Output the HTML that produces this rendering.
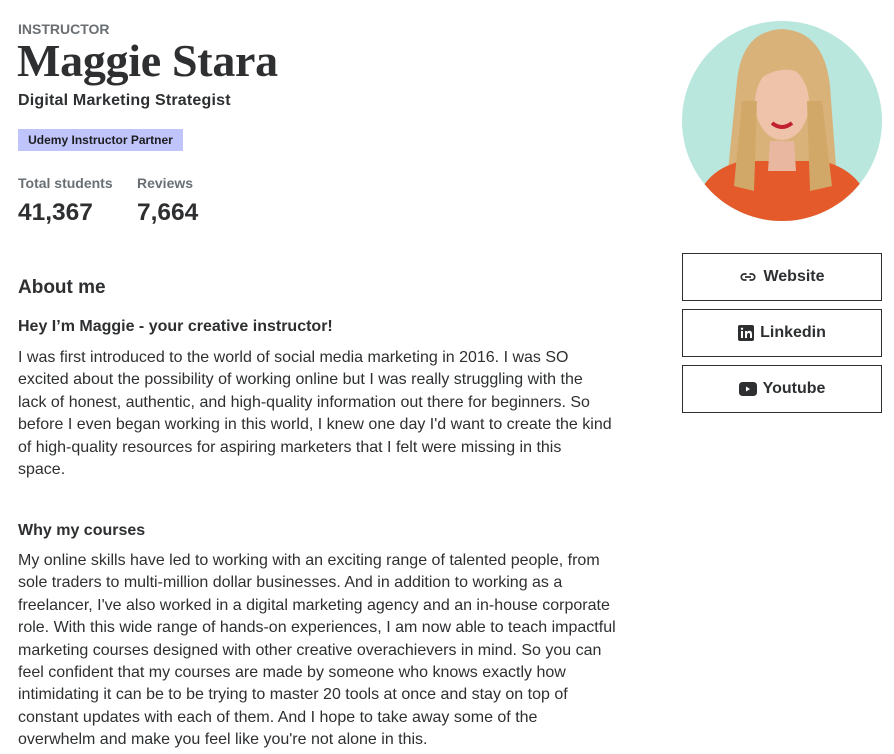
<!DOCTYPE html>
<html><head><meta charset="utf-8"><style>
body{margin:0;background:#fff;font-family:"Liberation Sans",sans-serif;color:#2d2f31;width:894px;height:754px;overflow:hidden;position:relative}
.a{position:absolute}
.p{font-size:16px;letter-spacing:0;line-height:22.4px;white-space:nowrap;margin:0}
.btn{position:absolute;left:682px;width:198px;height:46px;border:1px solid #2d2f31;display:flex;align-items:center;justify-content:center;font-weight:bold;font-size:16px;gap:6px}
</style></head><body>
<div class="a" style="left:18px;top:21px;font-size:14px;font-weight:bold;color:#6a6f73">INSTRUCTOR</div>
<div class="a" style="left:17px;top:34px;font-family:'Liberation Serif',serif;font-weight:bold;font-size:46px;letter-spacing:-0.3px">Maggie Stara</div>
<div class="a" style="left:18px;top:92px;font-size:16px;font-weight:bold;letter-spacing:0.2px">Digital Marketing Strategist</div>
<div class="a" style="left:18px;top:129px;width:165px;height:22px;background:#c0c4fc;font-size:12px;font-weight:bold;line-height:22px;text-align:center;color:#1c1d1f">Udemy Instructor Partner</div>
<div class="a" style="left:18px;top:175px;font-size:14px;font-weight:bold;color:#6a6f73">Total students</div>
<div class="a" style="left:137px;top:175px;font-size:14px;font-weight:bold;color:#6a6f73">Reviews</div>
<div class="a" style="left:18px;top:199px;font-size:24.5px;font-weight:bold">41,367</div>
<div class="a" style="left:137px;top:199px;font-size:24.5px;font-weight:bold">7,664</div>
<div class="a" style="left:18px;top:277px;font-size:19px;font-weight:bold">About me</div>
<div class="a" style="left:18px;top:318px;font-size:16px;font-weight:bold">Hey I’m Maggie - your creative instructor!</div>
<p class="a p" style="left:18px;top:347px">I was first introduced to the world of social media marketing in 2016. I was SO<br>excited about the possibility of working online but I was really struggling with the<br>lack of honest, authentic, and high-quality information out there for beginners. So<br>before I even began working in this world, I knew one day I'd want to create the kind<br>of high-quality resources for aspiring marketers that I felt were missing in this<br>space.</p>
<div class="a" style="left:18px;top:522px;font-size:16px;font-weight:bold">Why my courses</div>
<p class="a p" style="left:18px;top:550px">My online skills have led to working with an exciting range of talented people, from<br>sole traders to multi-million dollar businesses. And in addition to working as a<br>freelancer, I've also worked in a digital marketing agency and an in-house corporate<br>role. With this wide range of hands-on experiences, I am now able to teach impactful<br>marketing courses designed with other creative overachievers in mind. So you can<br>feel confident that my courses are made by someone who knows exactly how<br>intimidating it can be to be trying to master 20 tools at once and stay on top of<br>constant updates with each of them. And I hope to take away some of the<br>overwhelm and make you feel like you're not alone in this.</p>
<svg class="a" style="left:682px;top:21px" width="200" height="200" viewBox="0 0 200 200">
<defs><clipPath id="c"><circle cx="100" cy="100" r="100"/></clipPath></defs>
<g clip-path="url(#c)">
<rect width="200" height="200" fill="#b9e6dd"/>
<path d="M55 60 Q60 10 100 8 Q142 10 148 65 L155 160 L45 160 Z" fill="#d9b27a"/>
<path d="M10 200 Q15 150 60 140 L140 140 Q185 150 192 200 Z" fill="#e45a2a"/>
<path d="M88 120 L112 120 L114 150 L86 150 Z" fill="#e9b79f"/>
<ellipse cx="100" cy="82" rx="27" ry="37" fill="#efc3aa"/>
<path d="M70 60 Q80 20 110 22 Q130 30 132 70 L125 55 Q100 40 75 60 Z" fill="#d9b27a"/>
<path d="M60 80 L75 80 L72 170 L52 165 Z M125 80 L140 80 L150 165 L128 170 Z" fill="#d2a868"/>
<path d="M90 102 Q100 110 110 102" stroke="#c02030" stroke-width="4" fill="none"/>
</g></svg>
<div class="btn" style="top:253px"><svg width="18" height="18" viewBox="0 0 24 24" fill="none" stroke="#2d2f31" stroke-width="2.2"><path d="M10 8H7a4 4 0 0 0 0 8h3M14 8h3a4 4 0 0 1 0 8h-3M8 12h8"/></svg>Website</div>
<div class="btn" style="top:309px"><svg width="16" height="16" viewBox="0 0 16 16"><rect width="16" height="16" rx="2" fill="#2d2f31"/><rect x="3" y="6" width="2" height="7" fill="#fff"/><circle cx="4" cy="3.8" r="1.2" fill="#fff"/><path d="M7 6h2v1q1-1.2 2.5-1.2Q14 6 14 9v4h-2V9.5q0-1.5-1.3-1.5T9 9.5V13H7Z" fill="#fff"/></svg>Linkedin</div>
<div class="btn" style="top:365px"><svg width="18" height="14" viewBox="0 0 18 14"><rect width="18" height="14" rx="3.5" fill="#2d2f31"/><path d="M7 4.5v5l4-2.5z" fill="#fff"/></svg>Youtube</div>
</body></html>
